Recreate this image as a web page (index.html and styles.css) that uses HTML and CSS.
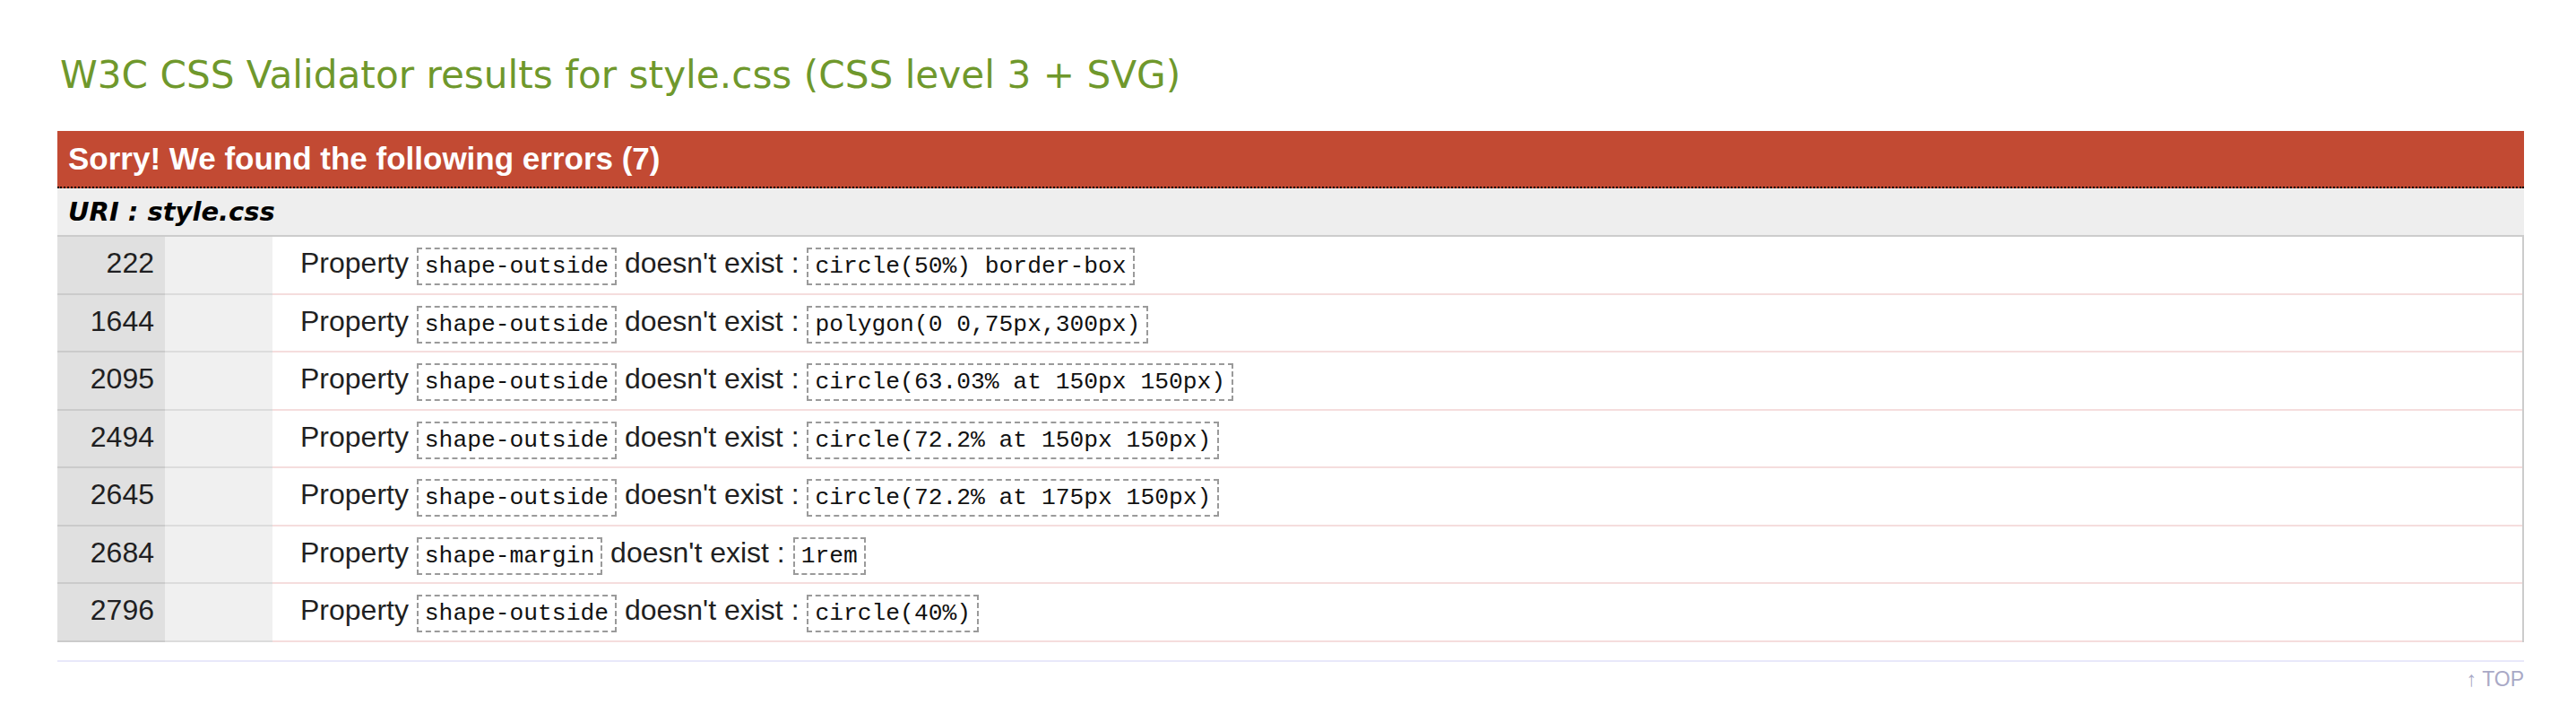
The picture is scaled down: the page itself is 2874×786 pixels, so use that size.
FILE: index.html
```html
<!DOCTYPE html>
<html lang="en">
<head>
<meta charset="utf-8">
<title>W3C CSS Validator results for style.css</title>
<link rel="stylesheet" href="styles.css">
</head>
<body>
<div class="page">
  <h2 class="title">W3C CSS Validator results for style.css (CSS level 3 + SVG)</h2>
  <div class="errors">
    <h3 class="errors-head">Sorry! We found the following errors (7)</h3>
    <h4 class="uri">URI : style.css</h4>
    <table class="err-table">
      <tr><td class="ln">222</td><td class="ctx"></td><td class="msg">Property <span class="code">shape-outside</span> doesn't exist : <span class="code">circle(50%) border-box</span></td></tr>
      <tr><td class="ln">1644</td><td class="ctx"></td><td class="msg">Property <span class="code">shape-outside</span> doesn't exist : <span class="code">polygon(0 0,75px,300px)</span></td></tr>
      <tr><td class="ln">2095</td><td class="ctx"></td><td class="msg">Property <span class="code">shape-outside</span> doesn't exist : <span class="code">circle(63.03% at 150px 150px)</span></td></tr>
      <tr><td class="ln">2494</td><td class="ctx"></td><td class="msg">Property <span class="code">shape-outside</span> doesn't exist : <span class="code">circle(72.2% at 150px 150px)</span></td></tr>
      <tr><td class="ln">2645</td><td class="ctx"></td><td class="msg">Property <span class="code">shape-outside</span> doesn't exist : <span class="code">circle(72.2% at 175px 150px)</span></td></tr>
      <tr><td class="ln">2684</td><td class="ctx"></td><td class="msg">Property <span class="code">shape-margin</span> doesn't exist : <span class="code">1rem</span></td></tr>
      <tr><td class="ln">2796</td><td class="ctx"></td><td class="msg">Property <span class="code">shape-outside</span> doesn't exist : <span class="code">circle(40%)</span></td></tr>
    </table>
  </div>
  <div class="footer"><a class="top" href="#">↑ TOP</a></div>
</div>
</body>
</html>
```

FILE: styles.css
```css
html, body {
  margin: 0;
  padding: 0;
  background: #ffffff;
}

body {
  font-family: "Liberation Sans", Arial, sans-serif;
  color: #1f1f22;
}

.page {
  padding: 0 58px 0 64px;
}

.title {
  margin: 63px 0 41px 3px;
  font-family: "DejaVu Sans", Verdana, sans-serif;
  font-weight: normal;
  font-size: 42.2px;
  line-height: 42px;
  color: #6f982c;
}

.errors-head {
  margin: 0;
  height: 62px;
  padding: 0 0 0 12px;
  background: #c24a33;
  color: #ffffff;
  font-family: "Liberation Sans", Arial, sans-serif;
  font-weight: bold;
  font-size: 35px;
  line-height: 62px;
  border-bottom: 2px dotted #000000;
}

.uri {
  margin: 0;
  height: 52px;
  padding: 0 0 0 12px;
  background: #eeeeee;
  font-family: "DejaVu Sans", Verdana, sans-serif;
  font-style: italic;
  font-weight: bold;
  font-size: 29px;
  line-height: 52px;
  color: #000000;
  border-bottom: 2px solid #cccccc;
}

.err-table {
  width: 100%;
  border-collapse: separate;
  border-spacing: 0;
  border-right: 2px solid #cccccc;
  font-size: 32px;
}

.err-table td {
  height: 58.5px;
  padding: 0 0 4px 0;
  line-height: 58.5px;
  vertical-align: middle;
  white-space: nowrap;
}

.ln {
  width: 108px;
  padding-right: 12px !important;
  text-align: right;
  background: #e0e0e0;
  border-bottom: 2px solid #cbcbcb;
}

.ctx {
  width: 120px;
  background: #f0f0f0;
  border-bottom: 2px solid #dcdcdc;
}

.msg {
  padding-left: 31px !important;
  background: #ffffff;
  border-bottom: 2px solid #f5dddd;
}

.code {
  font-family: "Liberation Mono", "Courier New", monospace;
  font-size: 26.3px;
  line-height: 29px;
  padding: 4px 7px;
  border: 2px dashed #9a9a9a;
  color: #111111;
}

.footer {
  margin-top: 20px;
  border-top: 2px solid #e8e8fa;
  padding-top: 6px;
  text-align: right;
  font-size: 23px;
  line-height: 26px;
}

.top {
  color: #a9a9c6;
  text-decoration: none;
}
```
